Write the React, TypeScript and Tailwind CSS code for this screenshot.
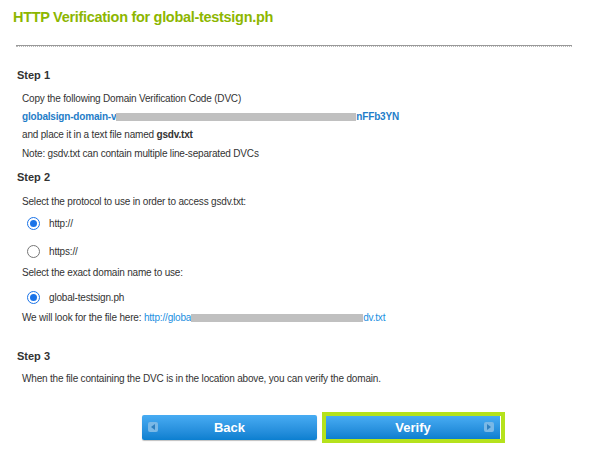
import React from 'react';

const Radio: React.FC<{ checked?: boolean }> = ({ checked }) => (
    <span
        className={
            checked
                ? 'w-[13px] h-[13px] rounded-full border border-[#1a73e8] flex items-center justify-center bg-white'
                : 'w-[13px] h-[13px] rounded-full border border-[#767676] bg-white'
        }
    >
        {checked && <span className="w-[7px] h-[7px] rounded-full bg-[#1a73e8]" />}
    </span>
);

const NavIcon: React.FC<{ dir: 'left' | 'right' }> = ({ dir }) => (
    <span className="w-[10px] h-[10px] rounded-[2px] bg-[#7ab8e6] flex items-center justify-center">
        <svg width="4" height="6" viewBox="0 0 4 6">
            {dir === 'left' ? <path d="M4 0 L0 3 L4 6 Z" fill="#2d7fc0" /> : <path d="M0 0 L4 3 L0 6 Z" fill="#2d7fc0" />}
        </svg>
    </span>
);

const App: React.FC = () => {
    return (
        <div className="w-[600px] h-[456px] bg-white text-[#333] font-['Liberation_Sans',Arial,sans-serif] overflow-hidden">
            {/* Header */}
            <div className="h-[36px] flex items-center pl-[13px]">
                <h1 className="text-[14.5px] tracking-[-0.3px] font-bold text-[#8db600]">HTTP Verification for global-testsign.ph</h1>
            </div>
            <div className="mt-[9px] ml-[16px] w-[556px] border-t border-[#999]">
                <div className="border-t border-dotted border-[#bbb]" />
            </div>

            <div className="pl-[17px]">
                {/* Step 1 */}
                <div className="mt-[19px] leading-[18px] text-[11px] font-bold">Step 1</div>
                <div className="pl-[5px] text-[10px] tracking-[-0.18px]">
                    <div className="mt-[6px] leading-[18px]">Copy the following Domain Verification Code (DVC)</div>
                    <div className="leading-[18px] flex items-center font-bold text-[#1f7dc8]">
                        <span>globalsign-domain-v</span>
                        <span className="w-[240px] h-[8px] bg-[#c0c0c0]" />
                        <span>nFFb3YN</span>
                    </div>
                    <div className="leading-[18px]">
                        and place it in a text file named <b>gsdv.txt</b>
                    </div>
                    <div className="mt-[1px] leading-[18px]">Note: gsdv.txt can contain multiple line-separated DVCs</div>
                </div>

                {/* Step 2 */}
                <div className="mt-[5px] leading-[18px] text-[11px] font-bold">Step 2</div>
                <div className="pl-[5px] text-[10px] tracking-[-0.18px]">
                    <div className="mt-[7px] leading-[18px]">Select the protocol to use in order to access gsdv.txt:</div>
                    <div className="mt-[3px] h-[18px] flex items-center gap-[9px] pl-[5px]">
                        <Radio checked />
                        <span>http://</span>
                    </div>
                    <div className="mt-[10px] h-[18px] flex items-center gap-[9px] pl-[5px]">
                        <Radio />
                        <span>https://</span>
                    </div>
                    <div className="mt-[4px] leading-[18px]">Select the exact domain name to use:</div>
                    <div className="mt-[6px] h-[18px] flex items-center gap-[9px] pl-[5px]">
                        <Radio checked />
                        <span>global-testsign.ph</span>
                    </div>
                    <div className="mt-[3px] leading-[18px] flex items-center">
                        <span>We will look for the file here:&nbsp;</span>
                        <span className="text-[#1a8fdf]">http://globa</span>
                        <span className="w-[172px] h-[8px] bg-[#c0c0c0]" />
                        <span className="text-[#1a8fdf]">dv.txt</span>
                    </div>
                </div>

                {/* Step 3 */}
                <div className="mt-[20px] leading-[18px] text-[11px] font-bold">Step 3</div>
                <div className="pl-[5px] text-[10px] tracking-[-0.18px]">
                    <div className="mt-[5px] leading-[18px]">When the file containing the DVC is in the location above, you can verify the domain.</div>
                </div>
            </div>

            {/* Buttons */}
            <div className="mt-[24px] pl-[142px] flex items-center gap-[5px]">
                <button className="relative w-[175px] h-[25px] rounded-[2px] bg-gradient-to-b from-[#47acf3] to-[#0a7fd0] shadow-[0_1px_1px_rgba(0,0,0,0.25)] text-white font-bold text-[13px] flex items-center justify-center">
                    <span className="absolute left-[6px] top-[7px]">
                        <NavIcon dir="left" />
                    </span>
                    Back
                </button>
                <div className="border-4 border-[#b5e21c]">
                    <button className="relative w-[175px] h-[23px] bg-gradient-to-b from-[#47acf3] to-[#0a7fd0] border-r border-white text-white font-bold text-[13px] flex items-center justify-center">
                        Verify
                        <span className="absolute right-[6px] top-[6px]">
                            <NavIcon dir="right" />
                        </span>
                    </button>
                </div>
            </div>
        </div>
    );
};

export default App;
